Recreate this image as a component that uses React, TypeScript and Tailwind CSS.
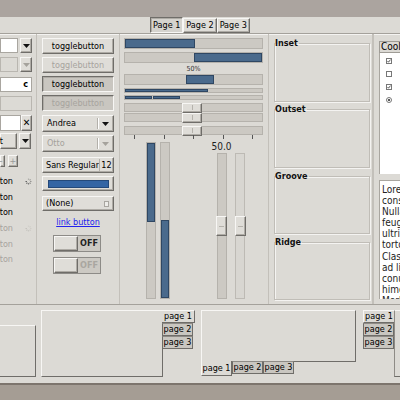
import React from 'react'

// GTK widget-factory look: raised / sunken bevels
const raised =
  'bg-[#dfddd8] border border-t-[#f7f6f4] border-l-[#f7f6f4] border-r-[#6f6d69] border-b-[#6f6d69] shadow-[inset_-1px_-1px_0_#aeaba5]'
const sunken =
  'bg-[#c9c6c0] border border-t-[#6f6d69] border-l-[#6f6d69] border-r-[#f7f6f4] border-b-[#f7f6f4] shadow-[inset_1px_1px_0_#aeaba5]'
const entry = 'bg-white border border-[#a9a6a0]'
const entryOff = 'bg-[#dcdad5] border border-[#b9b6b0]'
const trough = 'bg-[#ccc9c3] border border-[#b5b2ac]'
const fill = 'bg-[#4a6a8c] border border-[#2f4763]'

function Arrow({ off }: { off?: boolean }) {
  return (
    <svg width="7" height="4" viewBox="0 0 7 4">
      <polygon points="0,0 7,0 3.5,4" fill={off ? '#a5a29c' : '#111'} />
    </svg>
  )
}

function ArrowBtn({ off }: { off?: boolean }) {
  return (
    <div className={`w-[12px] h-full flex items-center justify-center ${raised}`}>
      <Arrow off={off} />
    </div>
  )
}

function Combo({ label, off }: { label: string; off?: boolean }) {
  return (
    <div className={`w-[72px] h-[17px] flex items-center ${raised}`}>
      <span className={`flex-1 pl-[4px] ${off ? 'text-[#a5a29c]' : 'text-black'}`}>{label}</span>
      <div className="w-px h-[11px] bg-[#b3b0aa] shadow-[1px_0_0_#fff]" />
      <div className="w-[15px] flex justify-center">
        <Arrow off={off} />
      </div>
    </div>
  )
}

function Toggle({ pressed, off }: { pressed?: boolean; off?: boolean }) {
  return (
    <div
      className={`w-[72px] h-[16px] flex items-center justify-center ${pressed ? sunken : raised} ${
        off ? 'text-[#a7a49e]' : 'text-black'
      }`}
    >
      togglebutton
    </div>
  )
}

function Spinner({ off }: { off?: boolean }) {
  const c = off ? '#c2bfb9' : '#555'
  return (
    <svg width="7" height="7" viewBox="0 0 8 8">
      {[0, 45, 90, 135, 180, 225, 270].map((a, i) => (
        <line
          key={a}
          x1="4"
          y1="0.6"
          x2="4"
          y2="2.2"
          stroke={c}
          strokeOpacity={0.35 + i * 0.1}
          strokeWidth="1.3"
          transform={`rotate(${a} 4 4)`}
        />
      ))}
    </svg>
  )
}

function Switch({ off }: { off?: boolean }) {
  return (
    <div className="ml-[11px] w-[48px] h-[17px] flex border border-[#8d8b87]">
      <div className={`w-[24px] h-full ${raised}`} />
      <div
        className={`flex-1 flex items-center justify-center bg-[#ccc9c3] font-bold ${
          off ? 'text-[#a9a6a0]' : 'text-[#222]'
        }`}
      >
        OFF
      </div>
    </div>
  )
}

function HBar({ children, h = 'h-[11px]' }: { children?: React.ReactNode; h?: string }) {
  return <div className={`w-[139px] ${h} flex ${trough}`}>{children}</div>
}

function Slider({ vertical }: { vertical?: boolean }) {
  return (
    <div
      className={`${vertical ? 'w-[11px] h-[20px]' : 'w-[20px] h-[10px]'} flex items-center justify-center ${raised}`}
    >
      <div className={vertical ? 'w-[5px] h-px bg-[#b5b2ac]' : 'w-px h-[5px] bg-[#b5b2ac]'} />
    </div>
  )
}

function HScale() {
  return (
    <div className={`w-[139px] h-[9px] flex items-center ${trough}`}>
      <div className="ml-[57px]">
        <Slider />
      </div>
    </div>
  )
}

function Frame({ label, cls }: { label: string; cls: string }) {
  return (
    <fieldset
      className={`w-[96px] border border-[#c0bdb7] shadow-[inset_1px_1px_0_#f4f3f1,1px_1px_0_#f4f3f1] ${cls}`}
    >
      <legend className="font-bold leading-[10px] pr-[1px] text-[#111]">{label}</legend>
    </fieldset>
  )
}

function Check({ on }: { on?: boolean }) {
  return (
    <div className="w-[6px] h-[6px] border border-[#777] bg-white flex items-center justify-center">
      {on && (
        <svg width="4" height="4" viewBox="0 0 4 4">
          <polyline points="0.5,2 1.5,3.2 3.5,0.6" fill="none" stroke="#333" strokeWidth="0.8" />
        </svg>
      )}
    </div>
  )
}

function Tab({ label, active, side }: { label: string; active?: boolean; side: 'r' | 'l' | 'b' }) {
  const base = 'h-[13px] flex items-center justify-center px-[1px] whitespace-nowrap'
  if (active) {
    const edge =
      side === 'r'
        ? 'border-t border-r border-b border-t-[#f7f6f4] border-r-[#6f6d69] border-b-[#6f6d69]'
        : side === 'l'
          ? 'border-t border-l border-b border-t-[#f7f6f4] border-l-[#f7f6f4] border-b-[#6f6d69]'
          : 'border-l border-r border-b border-l-[#f7f6f4] border-r-[#6f6d69] border-b-[#6f6d69] h-[15px]'
    return <div className={`${base} bg-[#dcdad5] ${edge}`}>{label}</div>
  }
  return <div className={`${base} bg-[#c9c6c0] border border-[#6f6d69] border-t-[#8e8b86]`}>{label}</div>
}

const lorem = [
  'Lorem ipsum dolor sit amet,',
  'consectetur adipiscing elit.',
  'Nullam fringilla, est ut',
  'feugiat ultrices, elit lacus',
  'ultricies nibh, id commodo',
  'tortor nisi id elit.',
  'Class aptent taciti sociosqu',
  'ad litora torquent per',
  'conubia nostra, per inceptos',
  'himenaeos.',
  'Morbi vel elit erat.',
  'dignissim quis mauris.',
]

export default function App() {
  return (
    <div className="w-[400px] h-[400px] overflow-hidden bg-[#dcdad5] flex flex-col text-[9px] leading-none font-['DejaVu_Sans_Condensed','DejaVu_Sans',sans-serif] font-stretch-condensed text-black">
      {/* desktop strip */}
      <div className="h-[17px] shrink-0 bg-[#aba49f]" />

      {/* top notebook tabs */}
      <div className="h-[16px] shrink-0 flex justify-center items-end">
        <div className={`h-[16px] px-[2px] flex items-center text-[9px] ${sunken} bg-[#d5d3ce]`}>Page 1</div>
        <div className={`h-[15px] px-[2px] flex items-center text-[9px] ${raised}`}>Page 2</div>
        <div className={`h-[15px] px-[2px] flex items-center text-[9px] ${raised}`}>Page 3</div>
      </div>

      {/* main notebook page */}
      <div className="h-[272px] shrink-0 flex border-t border-b border-[#a4a19b] shadow-[inset_0_1px_0_#f4f3f1]">
        {/* column 1 (cut off on the left) */}
        <div className="w-[37px] shrink-0 flex flex-col border-r border-[#c3c0ba]">
          <div className="mt-[4px] h-[15px] flex gap-[2px]">
            <div className={`w-[18px] ${entry}`} />
            <ArrowBtn />
          </div>
          <div className="mt-[4px] h-[15px] flex gap-[2px]">
            <div className={`w-[18px] ${entryOff}`} />
            <ArrowBtn off />
          </div>
          <div className={`mt-[5px] h-[15px] w-[32px] flex items-center justify-end pr-[3px] font-bold ${entry}`}>
            c
          </div>
          <div className={`mt-[4px] h-[15px] w-[32px] ${entryOff}`} />
          <div className="mt-[4px] h-[16px] flex">
            <div className={`w-[21px] ${entry}`} />
            <div className={`w-[11px] flex items-center justify-center text-[10px] font-bold ${raised}`}>✕</div>
          </div>
          <div className="mt-[2px] h-[16px] flex gap-[2px]">
            <div className={`w-[17px] flex items-center justify-end pr-[13px] ${raised}`}>
              <span className="whitespace-nowrap">Text</span>
            </div>
            <ArrowBtn />
          </div>
          <div className="mt-[6px] h-[12px] flex gap-[3px] text-[#999]">
            <div className={`w-[5px] flex items-center justify-end ${raised}`}>
              <span className="pr-px">−</span>
            </div>
            <div className={`w-[10px] flex items-center justify-center ${raised}`}>+</div>
          </div>
          <div className="mt-[7px] flex flex-col text-[9px]">
            {['checkbutton', 'checkbutton', 'checkbutton', 'radiobutton', 'radiobutton', 'radiobutton'].map((t, i) => (
              <div key={i} className={`h-[15.6px] flex items-center ${i > 2 ? 'text-[#a7a49e]' : ''}`}>
                <div className="w-[13px] flex justify-end whitespace-nowrap">{t}</div>
                <div className="ml-[12px]">{i === 0 ? <Spinner /> : i === 3 ? <Spinner off /> : null}</div>
              </div>
            ))}
          </div>
        </div>

        {/* column 2 */}
        <div className="w-[83px] shrink-0 flex flex-col pl-[5px] border-r border-[#c3c0ba] text-[9px]">
          <div className="mt-[4px]">
            <Toggle />
          </div>
          <div className="mt-[3px]">
            <Toggle off />
          </div>
          <div className="mt-[3px]">
            <Toggle pressed />
          </div>
          <div className="mt-[3px]">
            <Toggle pressed off />
          </div>
          <div className="mt-[4px]">
            <Combo label="Andrea" />
          </div>
          <div className="mt-[3px]">
            <Combo label="Otto" off />
          </div>
          <div className={`mt-[5px] w-[72px] h-[16px] flex items-center ${raised}`}>
            <span className="flex-1 pl-[3px] whitespace-nowrap">Sans Regular</span>
            <div className="w-px h-[12px] bg-[#b3b0aa]" />
            <span className="w-[14px] text-center">12</span>
          </div>
          <div className={`mt-[3px] w-[72px] h-[15px] flex items-center justify-center ${raised}`}>
            <div className="w-[61px] h-[8px] bg-[#3465a4] border border-[#24497a]" />
          </div>
          <div className={`mt-[5px] w-[72px] h-[15px] flex items-center ${raised}`}>
            <span className="flex-1 pl-[3px]">(None)</span>
            <div className="w-[5px] h-[6px] border border-[#a9a6a0] bg-[#eeede9] mr-[4px]" />
          </div>
          <div className="mt-[5px] w-[72px] h-[13px] flex items-center justify-center">
            <span className="text-[#2323ee] underline">link button</span>
          </div>
          <div className="mt-[6px]">
            <Switch />
          </div>
          <div className="mt-[5px]">
            <Switch off />
          </div>
        </div>

        {/* column 3: bars and scales */}
        <div className="w-[149px] shrink-0 flex flex-col pl-[4px] border-r border-[#c3c0ba]">
          <div className="mt-[4px]">
            <HBar>
              <div className={`w-[70px] ${fill}`} />
            </HBar>
          </div>
          <div className="mt-[3px]">
            <HBar>
              <div className="w-[69px]" />
              <div className={`flex-1 ${fill}`} />
            </HBar>
          </div>
          <div className="mt-[2px] h-[8px] w-[139px] flex items-center justify-center text-[7px] text-[#333]">50%</div>
          <div className="mt-[1px]">
            <HBar>
              <div className="w-[61px]" />
              <div className={`w-[28px] ${fill}`} />
            </HBar>
          </div>
          <div className="mt-[3px]">
            <HBar h="h-[5px]">
              <div className={`w-[83px] ${fill}`} />
            </HBar>
          </div>
          <div className="mt-[2px]">
            <HBar h="h-[5px]">
              <div className={`w-[27px] ${fill}`} />
              <div className={`ml-px w-[27px] ${fill}`} />
            </HBar>
          </div>
          <div className="mt-[3px]">
            <HScale />
          </div>
          <div className="mt-[1px]">
            <HScale />
          </div>
          <div className="mt-[4px]">
            <HScale />
          </div>
          <div className="w-[139px] h-[4px] flex justify-between px-[10px]">
            {[0, 1, 2, 3, 4].map((i) => (
              <div key={i} className="w-px h-[4px] bg-[#555]" />
            ))}
          </div>
          <div className="mt-[3px] flex h-[157px]">
            <div className={`ml-[22px] w-[10px] h-full flex flex-col ${trough}`}>
              <div className={`h-[79px] ${fill}`} />
            </div>
            <div className={`ml-[4px] w-[10px] h-full flex flex-col justify-end ${trough}`}>
              <div className={`h-[78px] ${fill}`} />
            </div>
            <div className="ml-[46px] w-[11px] flex flex-col items-center">
              <div className="h-[11px] text-[10px] whitespace-nowrap text-[#222]">50.0</div>
              <div className={`w-[10px] flex-1 flex flex-col items-center ${trough}`}>
                <div className="mt-[62px]">
                  <Slider vertical />
                </div>
              </div>
            </div>
            <div className="ml-[8px] w-[10px] flex flex-col pt-[11px]">
              <div className="flex-1 flex flex-col items-center bg-[#d8d6d1] border border-[#bdbab4]">
                <div className="mt-[62px]">
                  <Slider vertical />
                </div>
              </div>
            </div>
          </div>
        </div>

        {/* column 4: frames */}
        <div className="w-[104px] shrink-0 flex flex-col pl-[5px] border-r border-[#c3c0ba] shadow-[1px_0_0_#f4f3f1]">
          <Frame label="Inset" cls="mt-[4px] h-[64px]" />
          <Frame label="Outset" cls="mt-[2px] h-[64px]" />
          <Frame label="Groove" cls="mt-[3px] h-[63px]" />
          <Frame label="Ridge" cls="mt-[3px] h-[63px]" />
        </div>

        {/* column 5: tree + text view */}
        <div className="flex-1 flex flex-col pl-[5px] border-l border-[#c3c0ba]">
          <div className="mt-[7px] h-[12px] flex items-center pl-[1px] border-t border-l border-b border-[#9f9c96] bg-[#dcdad5] text-[10px]">
            Cool
          </div>
          <div className="h-[121px] bg-white border-l border-[#a9a6a0] flex flex-col gap-[7px] pt-[5px] pl-[6px]">
            <Check on />
            <Check />
            <Check on />
            <div className="w-[6px] h-[6px] rounded-full border border-[#777] bg-white flex items-center justify-center">
              <div className="w-[2px] h-[2px] rounded-full bg-[#222]" />
            </div>
          </div>
          <div className="mt-[6px] h-[119px] overflow-hidden bg-white border-l border-t border-[#a9a6a0] pl-[2px] pt-[3px] text-[10px] leading-[11.1px] text-[#222]">
            {lorem.map((l, i) => (
              <div key={i} className="whitespace-nowrap">
                {l}
              </div>
            ))}
          </div>
        </div>
      </div>

      {/* bottom notebooks */}
      <div className="h-[78px] shrink-0 flex items-start text-[9px]">
        <div className="mt-[20px] w-[36px] h-[52px] shrink-0 border-t border-r border-b border-t-[#f7f6f4] border-r-[#6f6d69] border-b-[#6f6d69]" />

        <div className="ml-[5px] mt-[5px] flex">
          <div className="w-[122px] h-[67px] border border-t-[#f7f6f4] border-l-[#f7f6f4] border-r-[#6f6d69] border-b-[#6f6d69]" />
          <div className="flex flex-col w-[33px] -ml-px">
            <Tab label="page 1" active side="r" />
            <div className="w-[31px]">
              <Tab label="page 2" side="r" />
              <Tab label="page 3" side="r" />
            </div>
          </div>
        </div>

        <div className="ml-[6px] mt-[5px] flex flex-col">
          <div className="w-[155px] h-[52px] border border-t-[#f7f6f4] border-l-[#f7f6f4] border-r-[#6f6d69] border-b-[#6f6d69]" />
          <div className="flex -mt-px items-start">
            <div className="w-[31px]">
              <Tab label="page 1" active side="b" />
            </div>
            <div className="w-[31px]">
              <Tab label="page 2" side="b" />
            </div>
            <div className="w-[31px]">
              <Tab label="page 3" side="b" />
            </div>
          </div>
        </div>

        <div className="ml-[5px] mt-[5px] flex">
          <div className="flex flex-col items-end w-[33px]">
            <Tab label="page 1" active side="l" />
            <div className="w-[31px]">
              <Tab label="page 2" side="l" />
              <Tab label="page 3" side="l" />
            </div>
          </div>
          <div className="w-[20px] h-[67px] border-t border-l border-b border-t-[#f7f6f4] border-l-[#8e8b86] border-b-[#6f6d69]" />
        </div>
      </div>

      {/* desktop strip */}
      <div className="flex-1 border-t-2 border-[#7d756d] bg-[#a59d94]" />
    </div>
  )
}
